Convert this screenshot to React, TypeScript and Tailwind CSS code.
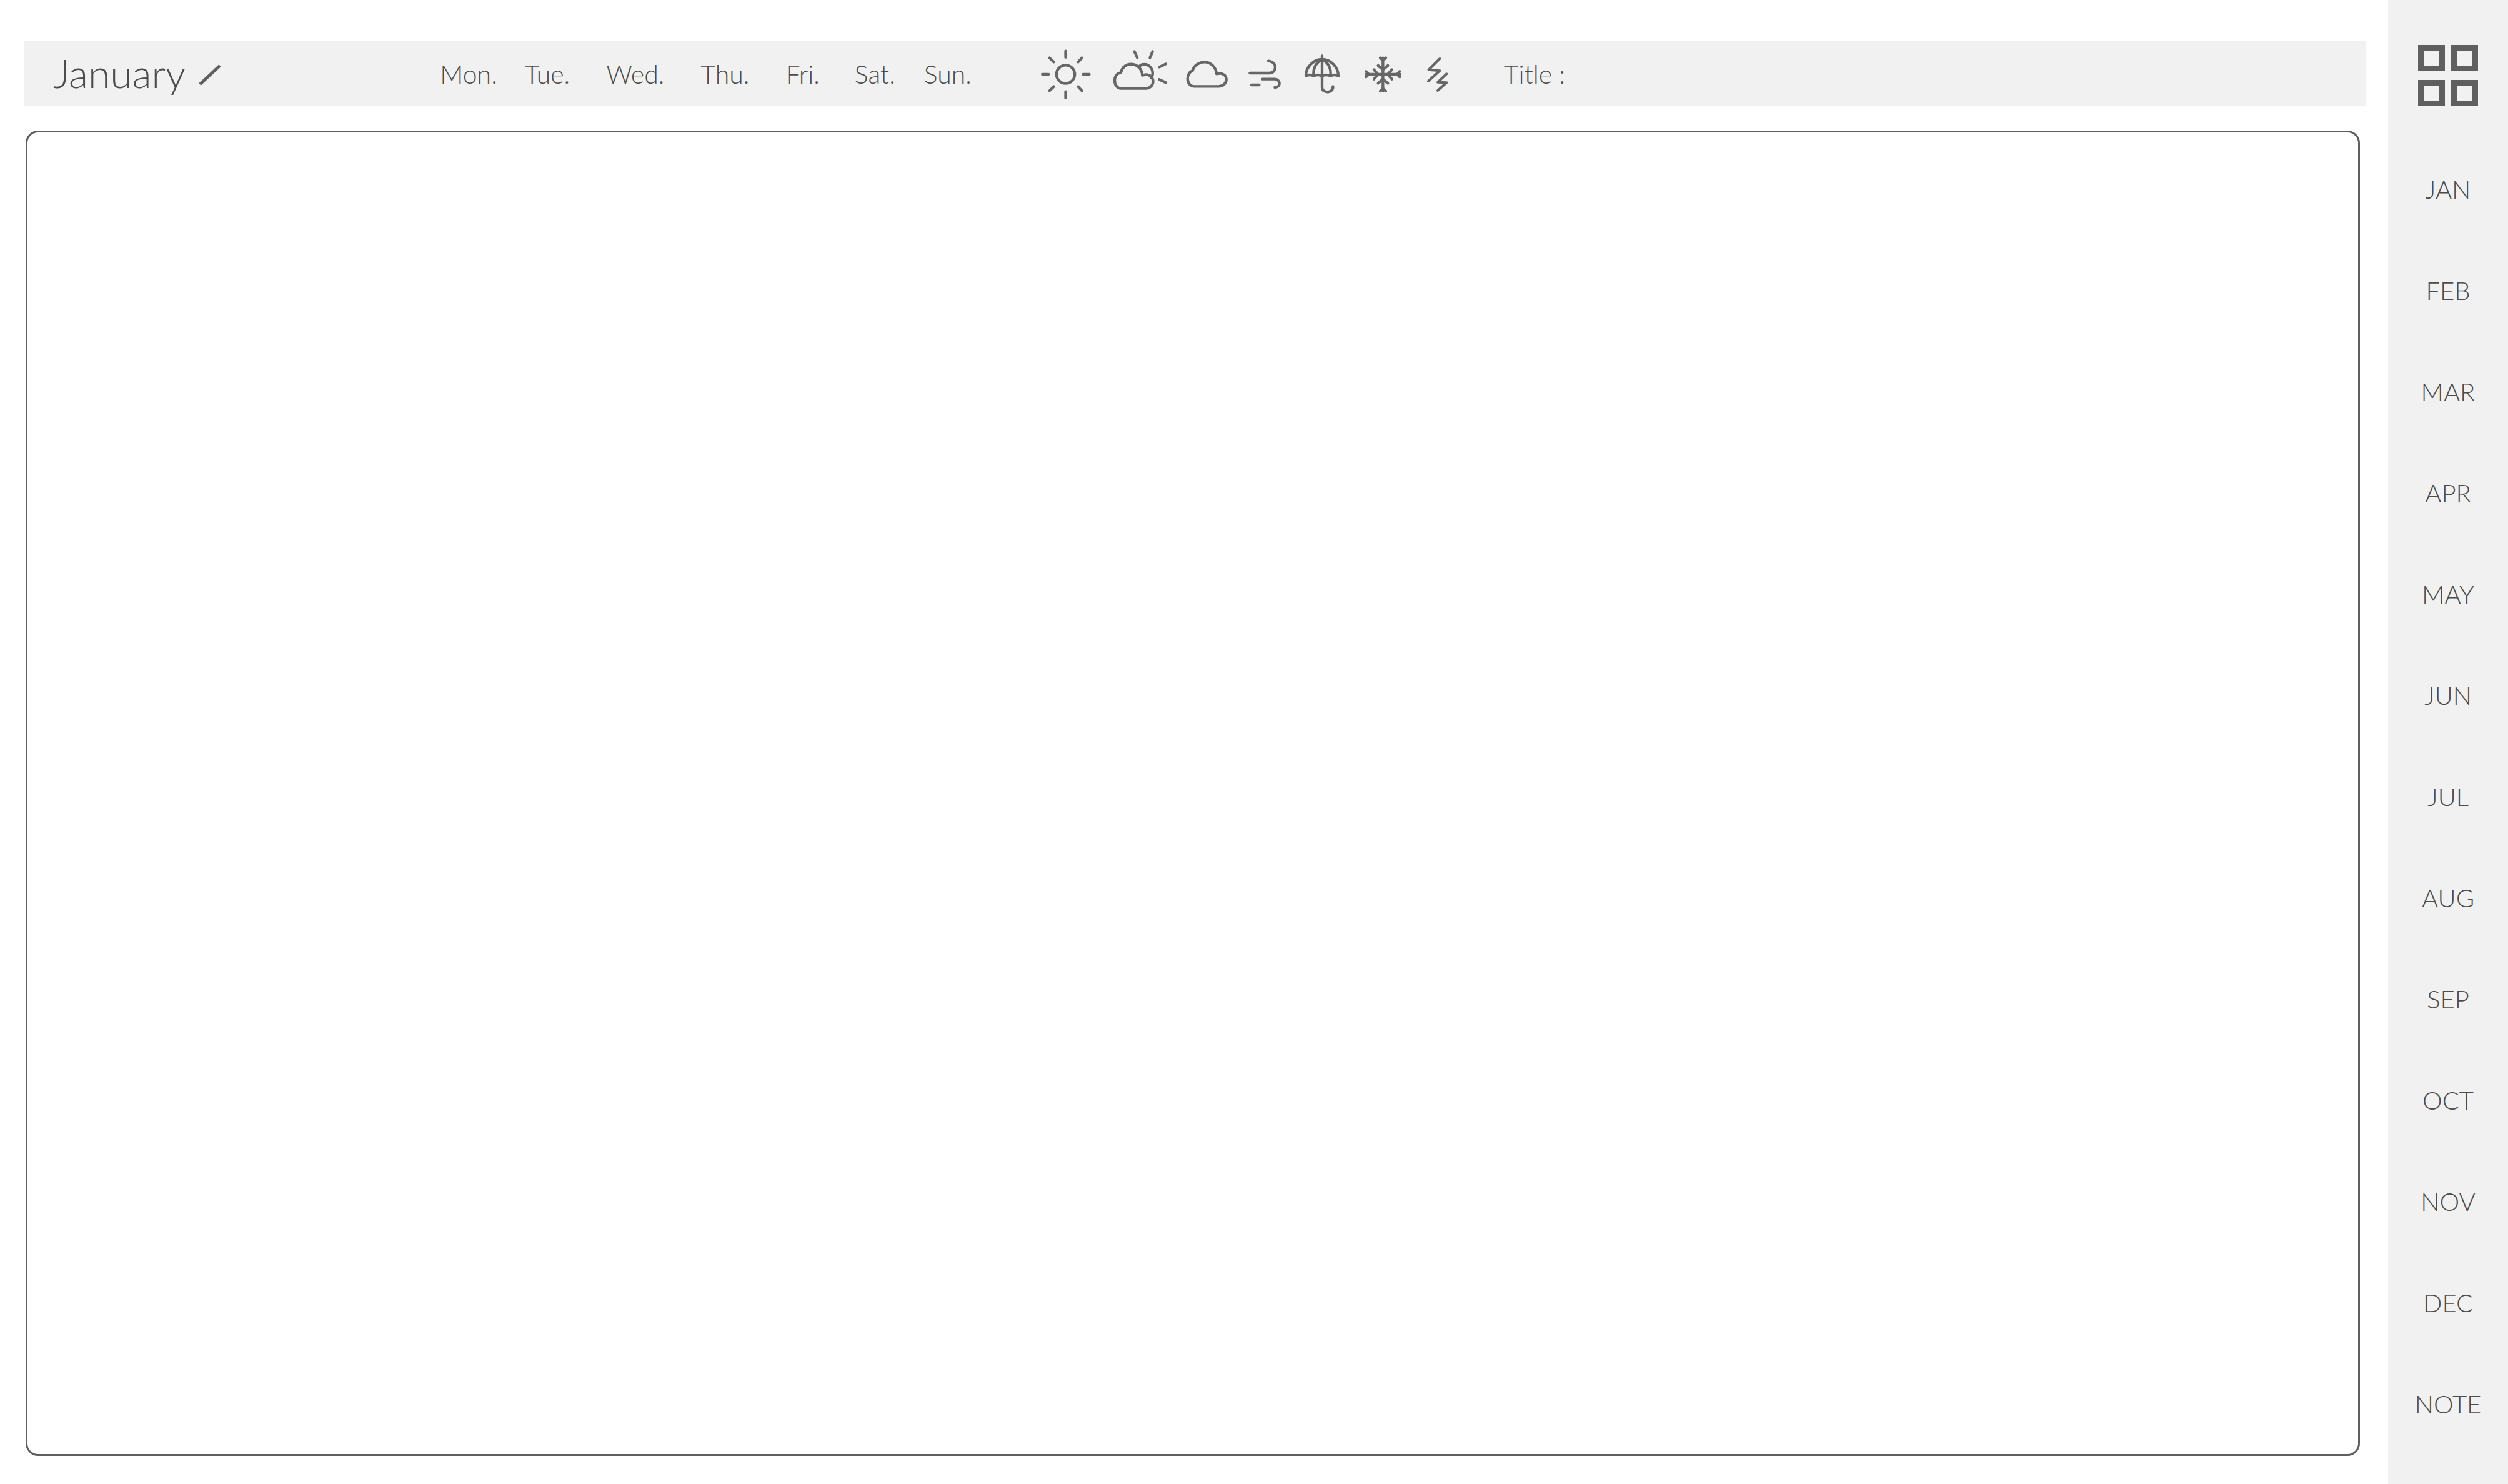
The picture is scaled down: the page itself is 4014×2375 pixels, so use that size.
const days = [
  { label: "Mon.", cls: "ml-[0px]" },
  { label: "Tue.", cls: "ml-[44px]" },
  { label: "Wed.", cls: "ml-[58px]" },
  { label: "Thu.", cls: "ml-[58px]" },
  { label: "Fri.", cls: "ml-[58px]" },
  { label: "Sat.", cls: "ml-[56px]" },
  { label: "Sun.", cls: "ml-[46px]" },
];
const months = ["JAN", "FEB", "MAR", "APR", "MAY", "JUN", "JUL", "AUG", "SEP", "OCT", "NOV", "DEC", "NOTE"];

function Icon({ box, w, cls, children, sw = 13 }: { box: string; w: number; cls?: string; children: React.ReactNode; sw?: number }) {
  return (
    <svg viewBox={box} width={w} height={80} fill="none" stroke="#666666" strokeWidth={sw} strokeLinecap="round" strokeLinejoin="round" className={`shrink-0 ${cls ?? ""}`}>
      {children}
    </svg>
  );
}

export default function App() {
  return (
    <div className="flex h-[2375px] w-[4014px] overflow-hidden bg-white font-['Lato','Liberation_Sans',sans-serif] font-light text-[#4c4c4c]">
      <main className="flex min-w-0 flex-1 flex-col pl-[38px] pr-[36px] pt-[66px]">
        <header className="flex h-[104px] items-center bg-[#f1f1f1]">
          <h1 className="mb-[2px] ml-[47px] text-[64px] leading-none font-light">January</h1>
          <svg viewBox="0 0 36 34" width={36} height={34} className="ml-[21px] mt-[4px] shrink-0" stroke="#5f5f5f" strokeWidth={5}>
            <path d="M2 32 L34 2" />
          </svg>
          <div className="ml-[350px] flex text-[41px] leading-none">
            {days.map((d) => (
              <span key={d.label} className={d.cls}>{d.label}</span>
            ))}
          </div>
          <Icon box="130 84 260 240" w={87} cls="ml-[107px]">
            <circle cx="260" cy="207" r="44" />
            <path d="M260 95V125M260 290V320M148 207H178M344 207H374M183 128L203 148M338 128L320 148M183 286L203 266M338 286L320 266" />
          </Icon>
          <Icon box="480 84 280 240" w={93} cls="ml-[30px]">
            <path d="M525 275H645C668 275 680 258 680 242C680 222 665 208 645 208L628 212C628 185 605 158 575 158C548 158 530 175 525 198C505 203 495 218 495 238C495 258 508 275 525 275Z" />
            <path d="M612 170C625 155 650 155 665 170C680 185 682 208 672 225" />
            <path d="M590 97L604 127M678 97L665 127M710 172L741 157M710 232L741 247" />
          </Icon>
          <Icon box="835 84 210 240" w={70} cls="ml-[25px]">
            <path d="M880 265H995C1018 265 1032 248 1032 232C1032 212 1015 198 985 205C982 170 955 148 928 148C898 148 875 168 870 190C855 193 846 212 846 228C846 250 860 265 880 265Z" />
          </Icon>
          <Icon box="1130 84 165 240" w={55} cls="ml-[29px]">
            <path d="M1143 201H1235C1255 201 1265 188 1265 172C1265 155 1250 145 1232 143" />
            <path d="M1203 230H1262C1278 230 1285 243 1285 252C1285 263 1275 270 1263 270" />
            <path d="M1150 258H1188" />
          </Icon>
          <Icon box="-10 24 180 240" w={60} cls="ml-[35px]">
            <path d="M80 58V210C80 240 135 240 132 205" />
            <path d="M2 155C2 110 40 75 80 75C120 75 158 110 158 155" />
            <path d="M80 75C50 90 35 120 40 155M80 75C110 90 125 120 120 155" />
            <path d="M2 155Q20 145 40 155Q60 145 80 155Q100 145 120 155Q140 145 158 155" />
          </Icon>
          <Icon box="280 24 190 240" w={64} cls="ml-[36px]">
            <path d="M373 68V228M292 147H456" />
            <path d="M350 105L373 125L397 105M360 68L373 80L387 68M350 190L373 170L397 190M360 228L373 215L387 228" />
            <path d="M330 125L350 147L330 170M292 133L305 147L292 160M416 125L396 147L416 170M454 133L441 147L454 160" />
          </Icon>
          <Icon box="575 24 120 240" w={40} cls="ml-[35px]" sw={12}>
            <path d="M645 72L592 125L645 130L590 180" />
            <path d="M678 145L635 185L678 187L635 225" />
          </Icon>
          <span className="ml-[86px] text-[41px] leading-none">Title :</span>
        </header>
        <section className="ml-[3px] mr-[9px] mt-[39px] h-[2121px] rounded-[20px] border-[3px] border-[#5f5f5f]" />
      </main>
      <aside className="flex w-[192px] shrink-0 flex-col items-center bg-[#f1f1f1]">
        <div className="mt-[72px] grid grid-cols-[43px_43px] gap-x-[10px] gap-y-[14px]">
          <div className="h-[42px] border-[9px] border-[#5f5f5f]" />
          <div className="h-[42px] border-[9px] border-[#5f5f5f]" />
          <div className="h-[42px] border-[9px] border-[#5f5f5f]" />
          <div className="h-[42px] border-[9px] border-[#5f5f5f]" />
        </div>
        <nav className="mt-[52px] flex w-full flex-col">
          {months.map((m) => (
            <div key={m} className="flex h-[162px] items-center justify-center text-[40px] leading-none">{m}</div>
          ))}
        </nav>
      </aside>
    </div>
  );
}
